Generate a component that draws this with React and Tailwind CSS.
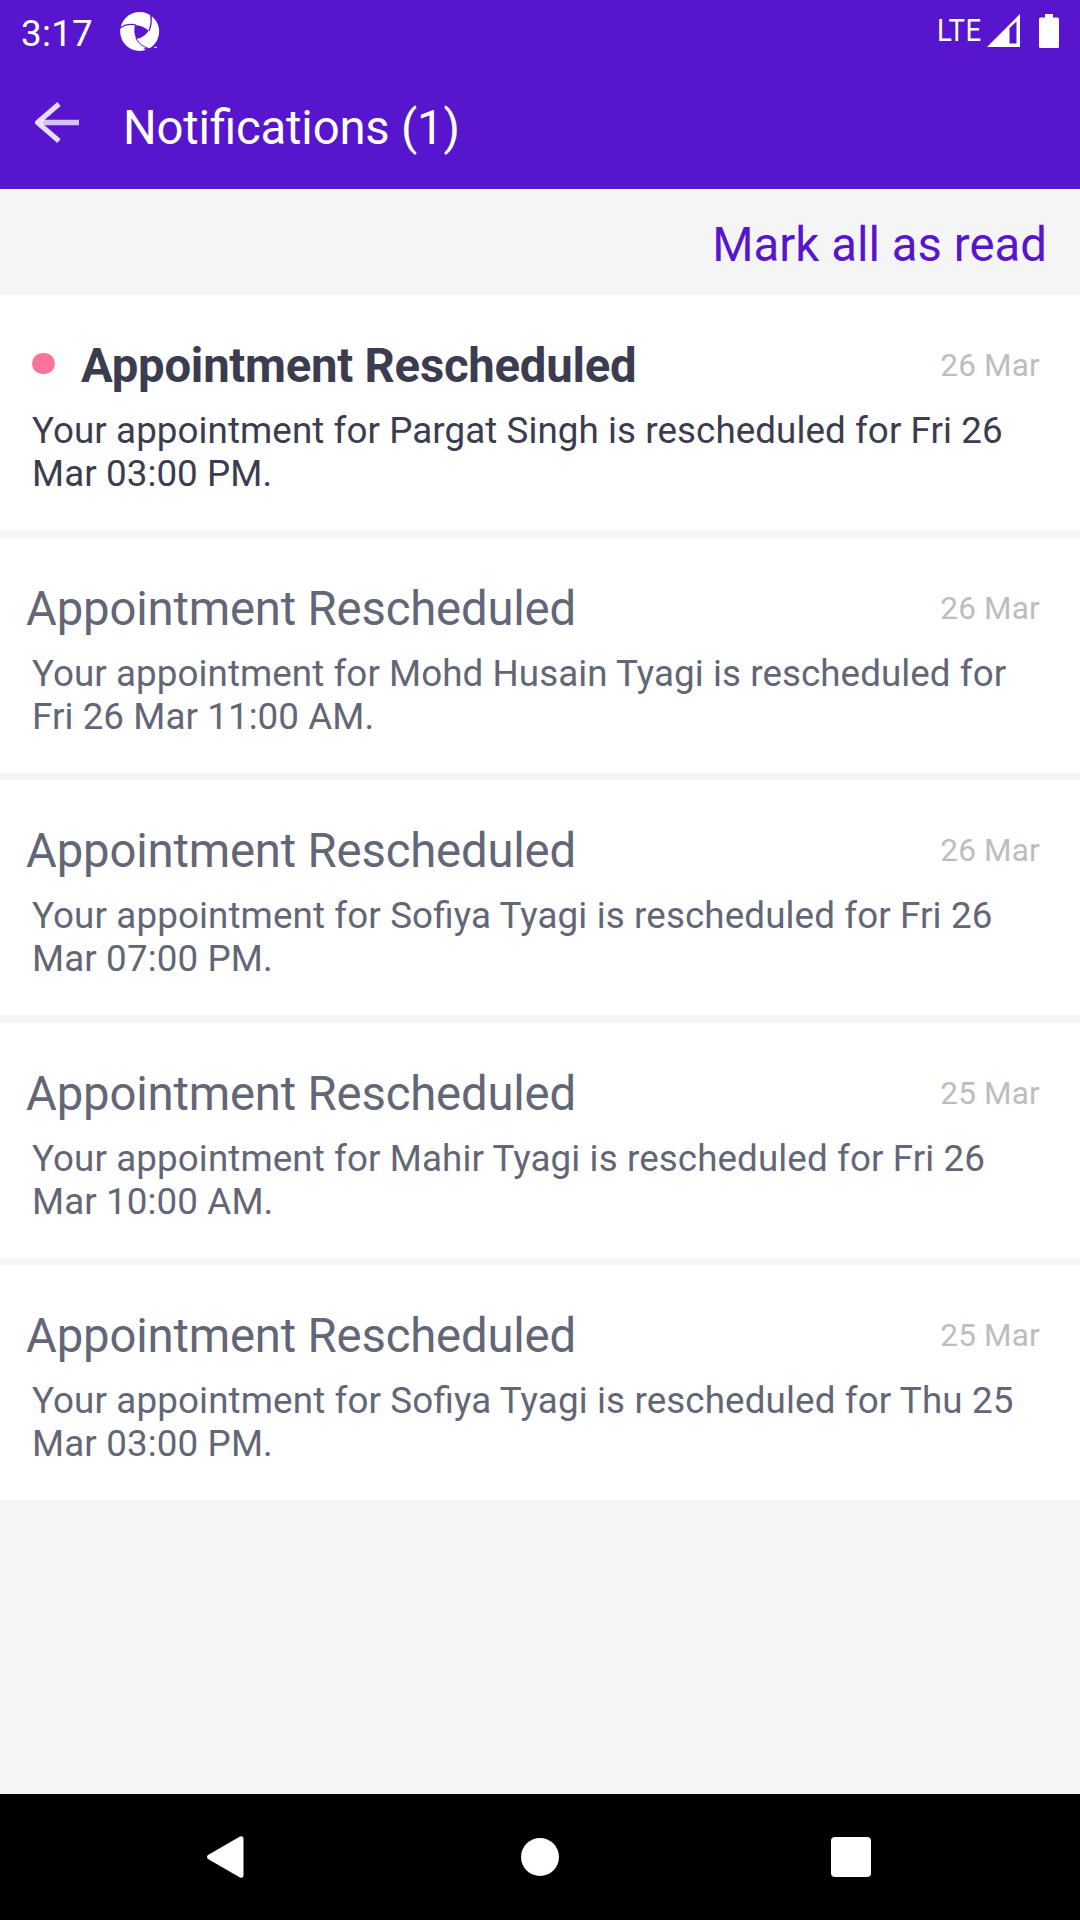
const notifications = [
  { lines: ["Your appointment for Pargat Singh is rescheduled for Fri 26", "Mar 03:00 PM."], date: "26 Mar", tracking: "tracking-[0.075px]", unread: true },
  { lines: ["Your appointment for Mohd Husain Tyagi is rescheduled for", "Fri 26 Mar 11:00 AM."], date: "26 Mar", tracking: "tracking-[0.07px]" },
  { lines: ["Your appointment for Sofiya Tyagi is rescheduled for Fri 26", "Mar 07:00 PM."], date: "26 Mar", tracking: "tracking-[0.12px]" },
  { lines: ["Your appointment for Mahir Tyagi is rescheduled for Fri 26", "Mar 10:00 AM."], date: "25 Mar", tracking: "tracking-[0.105px]" },
  { lines: ["Your appointment for Sofiya Tyagi is rescheduled for Thu 25", "Mar 03:00 PM."], date: "25 Mar", tracking: "tracking-[0.13px]" },
];

function ApertureIcon() {
  return (
    <svg viewBox="60 36 120 120" className="ml-[27px] mt-3 h-10 w-10">
      <circle cx="119" cy="94.500" r="58.500" fill="#fff" />
      <path d="M105 75Q126 76 146 92Q133 112 109 117Q99 95 105 75Z" fill="#5715ce" />
      <g fill="none" stroke="#5715ce">
        <path d="M60 84Q82 69 108 75" strokeWidth="3.500" />
        <path d="M153 46Q156 70 147 93" strokeWidth="4" />
        <path d="M107 115Q121 139 148 146" strokeWidth="3" />
      </g>
      <path d="M151 36L151 52L158 46Z" fill="#5715ce" />
      <path d="M138 155L137 149L130 144L152 145L163 139L163 160L139 160Z" fill="#5715ce" />
      <path d="M162 142H171" stroke="#fff" strokeWidth="3" />
    </svg>
  );
}

function StatusBar() {
  return (
    <div className="flex h-[63px] items-start pl-[21px] pr-[21px] text-white">
      <span className="mt-3 text-[36.75px] leading-[43px] tracking-[0.3px]">3:17</span>
      <ApertureIcon />
      <span className="ml-auto mt-[11px] w-[50px] origin-left scale-x-[0.86] whitespace-nowrap text-[32px] leading-[38px] tracking-[0.5px]">LTE</span>
      <svg viewBox="0 0 33 33" className="mt-[14px] h-[33px] w-[33px]">
        <path fillRule="evenodd" d="M0 33L33 0V33ZM22.500 14V29.500H29.500V7.500Z" fill="#fff" />
      </svg>
      <svg viewBox="0 0 20 34" className="ml-[19px] mt-[14px] h-[34px] w-5">
        <path d="M6 0H14V3.500H18.500Q20 3.500 20 5V32.500Q20 34 18.500 34H1.500Q0 34 0 32.500V5Q0 3.500 1.500 3.500H6Z" fill="#fff" />
      </svg>
    </div>
  );
}

function Header() {
  return (
    <header className="h-[189px] bg-[#5715ce]">
      <StatusBar />
      <div className="flex items-start pl-[34px] pt-[37px] text-white">
        <svg viewBox="0 0 46 44" className="h-11 w-[46px]" fill="none" stroke="#fff">
          <path d="M7 22.500H45" strokeWidth="5.500" opacity="0.75" />
          <path d="M25 4L3.500 22.500L25 41" strokeWidth="5" strokeOpacity="0.85" strokeLinejoin="round" />
        </svg>
        <h1 className="ml-[43px] mt-px text-[47.25px] leading-[55px] tracking-[-0.17px] [font-feature-settings:'liga']">Notifications (1)</h1>
      </div>
    </header>
  );
}

function NotificationCard({ item }) {
  return (
    <article className={item.unread ? "h-[235px] bg-white pt-[44px] text-[#3b3c50]" : "h-[235px] bg-white pt-[44px] text-[#626676]"}>
      <div className="flex items-start pr-[40px]">
        {item.unread && <span className="ml-8 mt-[14px] h-[21px] w-[23px] rounded-full bg-[#ff7399]" />}
        <h2 className={item.unread ? "ml-[26px] text-[47.25px] font-bold leading-[55px] tracking-[-0.24px]" : "ml-[26px] text-[47.25px] leading-[55px] tracking-[-0.17px]"}>
          Appointment Rescheduled
        </h2>
        <time className="ml-auto mt-[8px] text-[31.5px] leading-[37px] tracking-[0.2px] text-[#bdbdbd]">{item.date}</time>
      </div>
      <p className="mt-[15px] pl-8 text-[36.75px] leading-[43px] [font-feature-settings:'liga']">
        {item.lines.map((line) => (
          <span key={line} className={"block whitespace-nowrap " + item.tracking}>{line}</span>
        ))}
      </p>
    </article>
  );
}

function NavBar() {
  return (
    <nav className="flex h-[126px] items-center bg-black pl-[206px]">
      <svg viewBox="0 0 38 42" className="h-[42px] w-[38px]">
        <path d="M2 19L34 0.500Q37.500 -0.500 37.500 3V39Q37.500 42.500 34 41.500L2 23Q0 21 2 19Z" fill="#fff" />
      </svg>
      <span className="ml-[277px] h-[38px] w-[38px] rounded-full bg-white" />
      <span className="ml-[272px] h-10 w-10 rounded-[4px] bg-white" />
    </nav>
  );
}

export default function App() {
  return (
    <div className="flex h-[1920px] w-[1080px] flex-col overflow-hidden bg-[#f5f5f5] font-['Roboto',sans-serif]">
      <Header />
      <div className="flex h-[106px] items-start justify-end pr-[33px] pt-[29px]">
        <button className="text-[47.25px] leading-[55px] tracking-[0.06px] text-[#5715ce]">Mark all as read</button>
      </div>
      <main className="flex h-[1205px] flex-col justify-between">
        {notifications.map((item, i) => (
          <NotificationCard key={i} item={item} />
        ))}
      </main>
      <div className="flex-1" />
      <NavBar />
    </div>
  );
}
